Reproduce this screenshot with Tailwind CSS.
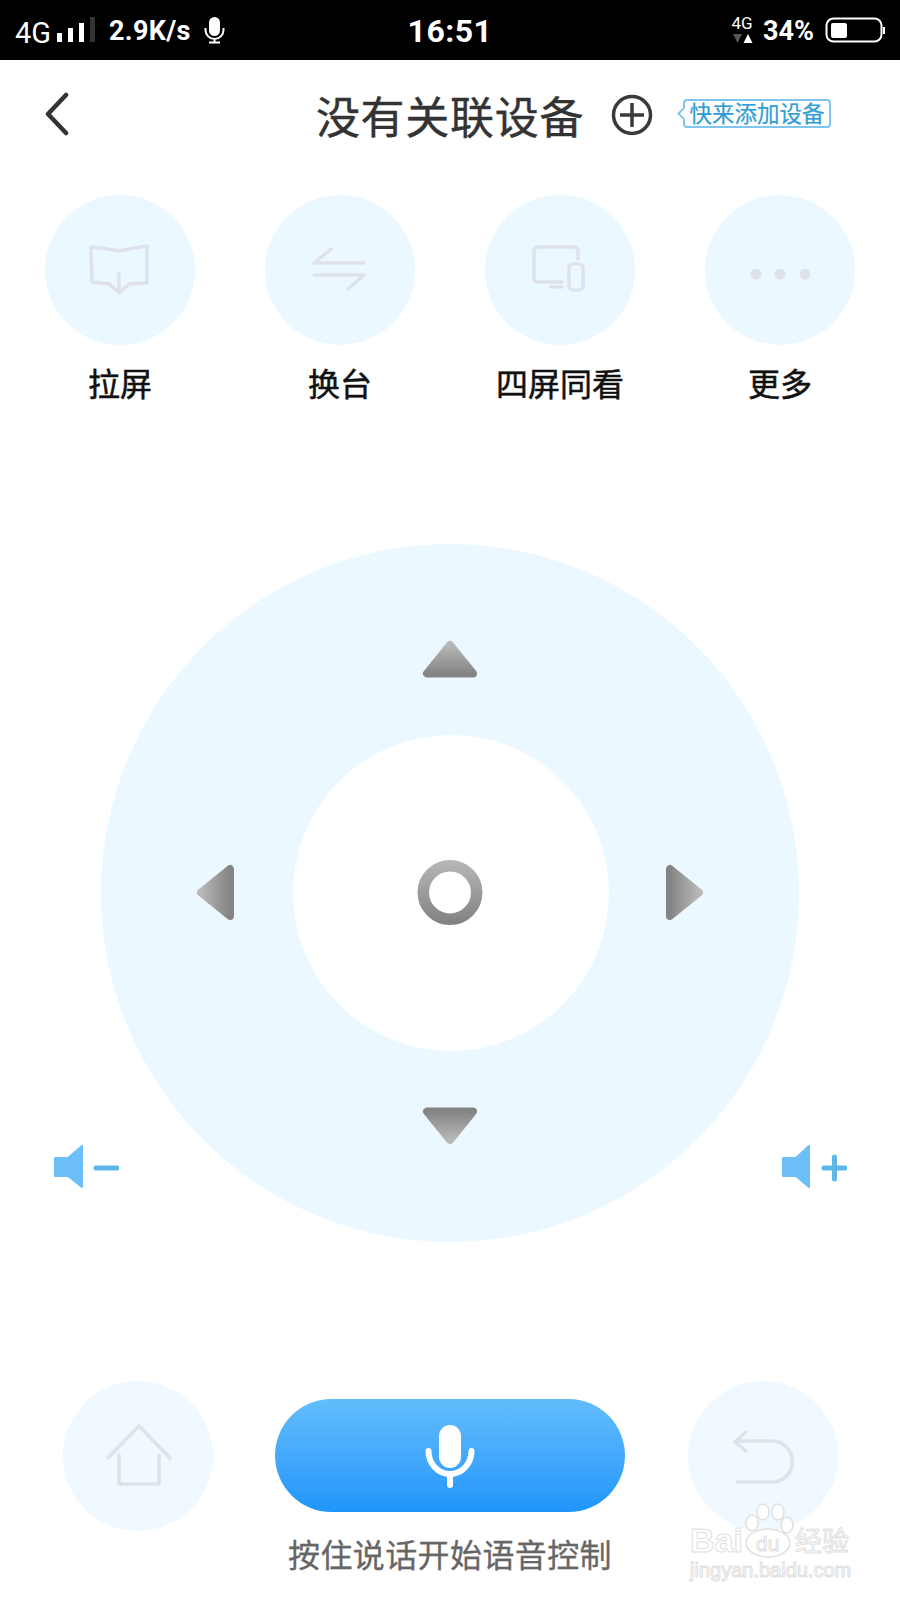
<!DOCTYPE html>
<html lang="zh-CN">
<head>
    <meta charset="UTF-8">
    <meta name="viewport" content="width=device-width, initial-scale=1.0">
    <title>遥控器</title>
    <script src="https://cdn.jsdelivr.net/npm/@tailwindcss/browser@4"></script>
</head>
<body class="bg-white">
    <div class="relative w-[900px] h-[1600px] overflow-hidden bg-white font-['Noto_Sans_CJK_SC','Noto_Sans',sans-serif]">

        <!-- 状态栏 -->
        <div class="grid grid-cols-[1fr_auto_1fr] items-center h-[60px] bg-black text-white font-['Roboto',sans-serif]">
            <div class="flex items-center pl-[15px]">
                <span class="text-[29px] leading-[34px] mt-[5px]">4G</span>
                <svg class="ml-[6px] w-[40px] h-[30px]" viewBox="58 15 40 30">
                    <rect x="58" y="33" width="5" height="9" fill="#fff"/>
                    <rect x="69" y="28" width="5" height="14" fill="#fff"/>
                    <rect x="80" y="23" width="5" height="19" fill="#fff"/>
                    <rect x="91" y="17" width="5" height="25" fill="#333"/>
                </svg>
                <span class="ml-[12px] mt-[2px] text-[27px] leading-[34px] font-bold tracking-[0.3px]">2.9K/s</span>
                <svg class="ml-[13px] w-[22px] h-[28px]" viewBox="203 16 22 28" fill="none">
                    <rect x="208" y="17" width="11" height="19" rx="5.5" fill="#fff"/>
                    <path d="M204.500 28v2a9 9 0 0 0 18 0v-2M213.500 39v3M208 42.500h11" stroke="#fff" stroke-width="2"/>
                </svg>
            </div>
            <div class="text-[32px] leading-[40px] mt-[2px] font-bold tracking-[0.5px]">16:51</div>
            <div class="flex items-center justify-end pr-[15px]">
                <div class="flex flex-col items-center w-[24px] mt-[-3px]">
                    <span class="text-[17px] leading-[17px]">4G</span>
                    <svg class="w-[22px] h-[9px] mt-[2px]" viewBox="0 0 22 9">
                        <path d="M2 0h9l-4.500 9z" fill="#555"/>
                        <path d="M17 0l4.500 9h-9z" fill="#fff"/>
                    </svg>
                </div>
                <span class="ml-[9px] mt-[2px] text-[27px] leading-[34px] font-bold">34%</span>
                <svg class="ml-[11px] w-[60px] h-[26px]" viewBox="825 17 60 26" fill="none">
                    <rect x="826.500" y="18.500" width="55" height="23" rx="7" stroke="#fff" stroke-width="2"/>
                    <rect x="831" y="23" width="16" height="15" rx="2" fill="#fff"/>
                    <rect x="883" y="27" width="2" height="7" fill="#fff"/>
                </svg>
            </div>
        </div>

        <!-- 标题栏 -->
        <div class="grid grid-cols-[1fr_auto_1fr] items-center h-[110px]">
            <div class="pl-[44px]">
                <svg class="w-[28px] h-[46px]" viewBox="44 90 28 46" fill="none">
                    <path d="M66 93 48 112l18 19" stroke="#333" stroke-width="4.500" stroke-linecap="round" stroke-linejoin="round"/>
                </svg>
            </div>
            <div class="text-[44px] leading-[60px] text-[#333] tracking-[0.7px] mt-[-1px] [-webkit-text-stroke:0.4px_#333]">没有关联设备</div>
            <div class="flex items-center pl-[27px]">
                <svg class="w-[42px] h-[42px] shrink-0 mt-[-1px]" viewBox="0 0 42 42" fill="none">
                    <circle cx="21" cy="21" r="18.500" stroke="#3a3a3a" stroke-width="3.500"/>
                    <path d="M21 9v24M9 21h24" stroke="#3a3a3a" stroke-width="3.500"/>
                </svg>
                <div class="relative ml-[30px] mt-[-4px] w-[148px] h-[29px] border-2 border-[#80c6ec] rounded-[4px] flex items-center justify-center text-[22.500px] leading-[26px] text-[#2f9ed6] whitespace-nowrap [-webkit-text-stroke:0.2px_#2f9ed6]">
                    <span class="mt-[-3px]">快来添加设备</span>
                    <span class="absolute left-[-6px] top-[8px] w-[9px] h-[9px] rotate-45 bg-white border-l-2 border-b-2 border-[#80c6ec]"></span>
                </div>
            </div>
        </div>

        <!-- 功能按钮 -->
        <div class="grid grid-cols-4 px-[10px] mt-[25px]">
            <div class="flex flex-col items-center">
                <div class="w-[150px] h-[150px] rounded-full bg-[#ecf8ff]">
                    <svg class="w-[150px] h-[150px]" viewBox="45 195 150 150" fill="none" stroke="#dfe2ea" stroke-width="3.500" stroke-linecap="round" stroke-linejoin="round">
                        <path d="M110 284 92 282 91 247Q105 248 119 251 133 248 147 246V283L129 284"/>
                        <path d="M119 274V293M109 284l10 9 10-9"/>
                    </svg>
                </div>
                <div class="mt-[17px] text-[32px] leading-[40px] text-[#111] [-webkit-text-stroke:0.5px_#111]">拉屏</div>
            </div>
            <div class="flex flex-col items-center">
                <div class="w-[150px] h-[150px] rounded-full bg-[#ecf8ff]">
                    <svg class="w-[150px] h-[150px]" viewBox="265 195 150 150" fill="none" stroke="#dfe2ea" stroke-width="3.500" stroke-linecap="round" stroke-linejoin="round">
                        <path d="M364 263H314L331 249"/>
                        <path d="M314 275H364L348 289"/>
                    </svg>
                </div>
                <div class="mt-[17px] text-[32px] leading-[40px] text-[#111] [-webkit-text-stroke:0.5px_#111]">换台</div>
            </div>
            <div class="flex flex-col items-center">
                <div class="w-[150px] h-[150px] rounded-full bg-[#ecf8ff]">
                    <svg class="w-[150px] h-[150px]" viewBox="485 195 150 150" fill="none" stroke="#dfe2ea" stroke-width="3.500" stroke-linecap="round" stroke-linejoin="round">
                        <path d="M578 259V250a3 3 0 0 0-3-3H537a3 3 0 0 0-3 3V279a3 3 0 0 0 3 3H562"/>
                        <path d="M551 287H562"/>
                        <rect x="569" y="264" width="14" height="26" rx="4"/>
                    </svg>
                </div>
                <div class="mt-[17px] text-[32px] leading-[40px] text-[#111] [-webkit-text-stroke:0.5px_#111]">四屏同看</div>
            </div>
            <div class="flex flex-col items-center">
                <div class="w-[150px] h-[150px] rounded-full bg-[#ecf8ff]">
                    <svg class="w-[150px] h-[150px]" viewBox="705 195 150 150" fill="#dfe2ea">
                        <circle cx="756" cy="274" r="5.500"/>
                        <circle cx="780" cy="274" r="5.500"/>
                        <circle cx="805" cy="274" r="5.500"/>
                    </svg>
                </div>
                <div class="mt-[17px] text-[32px] leading-[40px] text-[#111] [-webkit-text-stroke:0.5px_#111]">更多</div>
            </div>
        </div>

        <!-- 方向键 -->
        <div class="relative mx-auto mt-[142px] w-[698px] h-[698px] rounded-full bg-[#ecf8ff] flex items-center justify-center">
            <div class="w-[316px] h-[316px] ml-[1px] rounded-full bg-white"></div>
            <svg class="absolute inset-0 w-[698px] h-[698px]" viewBox="101 544 698 698" fill="none">
                <defs>
                    <linearGradient id="gUp" x1="0" y1="0" x2="0" y2="1">
                        <stop offset="0" stop-color="#b8b8b8"/>
                        <stop offset="1" stop-color="#848484"/>
                    </linearGradient>
                    <linearGradient id="gDown" x1="0" y1="1" x2="0" y2="0">
                        <stop offset="0" stop-color="#b8b8b8"/>
                        <stop offset="1" stop-color="#848484"/>
                    </linearGradient>
                    <linearGradient id="gLeft" x1="0" y1="0" x2="1" y2="0">
                        <stop offset="0" stop-color="#b8b8b8"/>
                        <stop offset="1" stop-color="#848484"/>
                    </linearGradient>
                    <linearGradient id="gRight" x1="1" y1="0" x2="0" y2="0">
                        <stop offset="0" stop-color="#b8b8b8"/>
                        <stop offset="1" stop-color="#848484"/>
                    </linearGradient>
                    <linearGradient id="gRing" gradientUnits="userSpaceOnUse" x1="450" y1="860" x2="450" y2="925">
                        <stop offset="0" stop-color="#b8b8b8"/>
                        <stop offset="1" stop-color="#808080"/>
                    </linearGradient>
                </defs>
                <path d="M450 645 427 673.500H473Z" fill="url(#gUp)" stroke="url(#gUp)" stroke-width="8" stroke-linejoin="round"/>
                <path d="M450 1140 427 1111.500H473Z" fill="url(#gDown)" stroke="url(#gDown)" stroke-width="8" stroke-linejoin="round"/>
                <path d="M201 892.500 230 869V916Z" fill="url(#gLeft)" stroke="url(#gLeft)" stroke-width="8" stroke-linejoin="round"/>
                <path d="M699 892.500 670 869V916Z" fill="url(#gRight)" stroke="url(#gRight)" stroke-width="8" stroke-linejoin="round"/>
                <circle cx="450" cy="892.500" r="26.700" stroke="url(#gRing)" stroke-width="11.500"/>
            </svg>
        </div>

        <!-- 音量 -->
        <div class="flex justify-between mt-[-97px] pl-[54px] pr-[53px] h-[43px]">
            <svg class="relative w-[65px] h-[43px]" viewBox="54 1145 65 43">
                <path d="M55 1158H68L82 1146V1187L68 1176H55Z" fill="#6cc0f7" stroke="#6cc0f7" stroke-width="2" stroke-linejoin="round"/>
                <path d="M96 1168H117" stroke="#5fb6e8" stroke-width="5" stroke-linecap="round"/>
            </svg>
            <svg class="relative w-[65px] h-[43px]" viewBox="782 1145 65 43">
                <path d="M783 1158H796L809 1146V1187L796 1176H783Z" fill="#6cc0f7" stroke="#6cc0f7" stroke-width="2" stroke-linejoin="round"/>
                <path d="M824 1168H845M834.500 1157V1179" stroke="#5fb6e8" stroke-width="5" stroke-linecap="round"/>
            </svg>
        </div>

        <!-- 底部按钮 -->
        <div class="flex items-start pl-[63px] mt-[193px]">
            <div class="w-[150px] h-[150px] rounded-full bg-[#eff9ff] shrink-0">
                <svg class="w-[150px] h-[150px]" viewBox="63 1381 150 150" fill="none" stroke="#dfe2ea" stroke-width="3.500" stroke-linecap="round" stroke-linejoin="round">
                    <path d="M108 1458 139 1426 170 1458"/>
                    <path d="M119 1455V1484H159V1455"/>
                </svg>
            </div>
            <div class="flex flex-col items-center w-[350px] ml-[62px] mt-[18px] shrink-0">
                <div class="w-[350px] h-[113px] rounded-full bg-gradient-to-b from-[#62bdfb] to-[#1e95fb] flex items-center justify-center">
                    <svg class="w-[50px] h-[64px]" viewBox="425 1424 50 64" fill="none">
                        <rect x="439" y="1425" width="22" height="43" rx="11" fill="#fff"/>
                        <path d="M428.500 1451a21.500 23 0 0 0 43 0M450 1474V1485" stroke="#fff" stroke-width="6" stroke-linecap="round"/>
                    </svg>
                </div>
                <div class="mt-[21px] text-[32px] leading-[40px] tracking-[0.4px] text-[#666] whitespace-nowrap [-webkit-text-stroke:0.3px_#666]">按住说话开始语音控制</div>
            </div>
            <div class="w-[150px] h-[150px] rounded-full bg-[#eff9ff] ml-[63px] shrink-0">
                <svg class="w-[150px] h-[150px]" viewBox="688 1381 150 150" fill="none" stroke="#dfe2ea" stroke-width="3.500" stroke-linecap="round" stroke-linejoin="round">
                    <path d="M746 1432 735 1442 746 1451"/>
                    <path d="M736 1441H772a20.500 20.500 0 0 1 0 41H737"/>
                </svg>
            </div>
        </div>

        <!-- 水印 -->
        <div class="absolute left-[688px] top-[1500px] w-[170px] h-[84px] text-transparent font-['Liberation_Sans',sans-serif] [-webkit-text-stroke:1px_#e0e0e0]">
            <svg class="absolute inset-0 w-[170px] h-[84px]" viewBox="688 1500 170 84" fill="#fff" stroke="#e0e0e0" stroke-width="1.500">
                <ellipse cx="752" cy="1523" rx="6" ry="8"/>
                <ellipse cx="763" cy="1512" rx="6" ry="8"/>
                <ellipse cx="778" cy="1512" rx="6" ry="8"/>
                <ellipse cx="787" cy="1525" rx="6" ry="8"/>
                <ellipse cx="768" cy="1543" rx="22" ry="14"/>
            </svg>
            <span class="absolute left-[2px] top-[23px] text-[34px] leading-[34px] font-bold">Bai</span>
            <span class="absolute left-[68px] top-[33px] text-[21px] leading-[22px]">du</span>
            <span class="absolute left-[107px] top-[25px] text-[27px] leading-[30px] font-['Noto_Sans_CJK_SC',sans-serif]">经验</span>
            <span class="absolute left-[2px] top-[59px] text-[20px] leading-[22px]">jingyan.baidu.com</span>
        </div>
    </div>
</body>
</html>
